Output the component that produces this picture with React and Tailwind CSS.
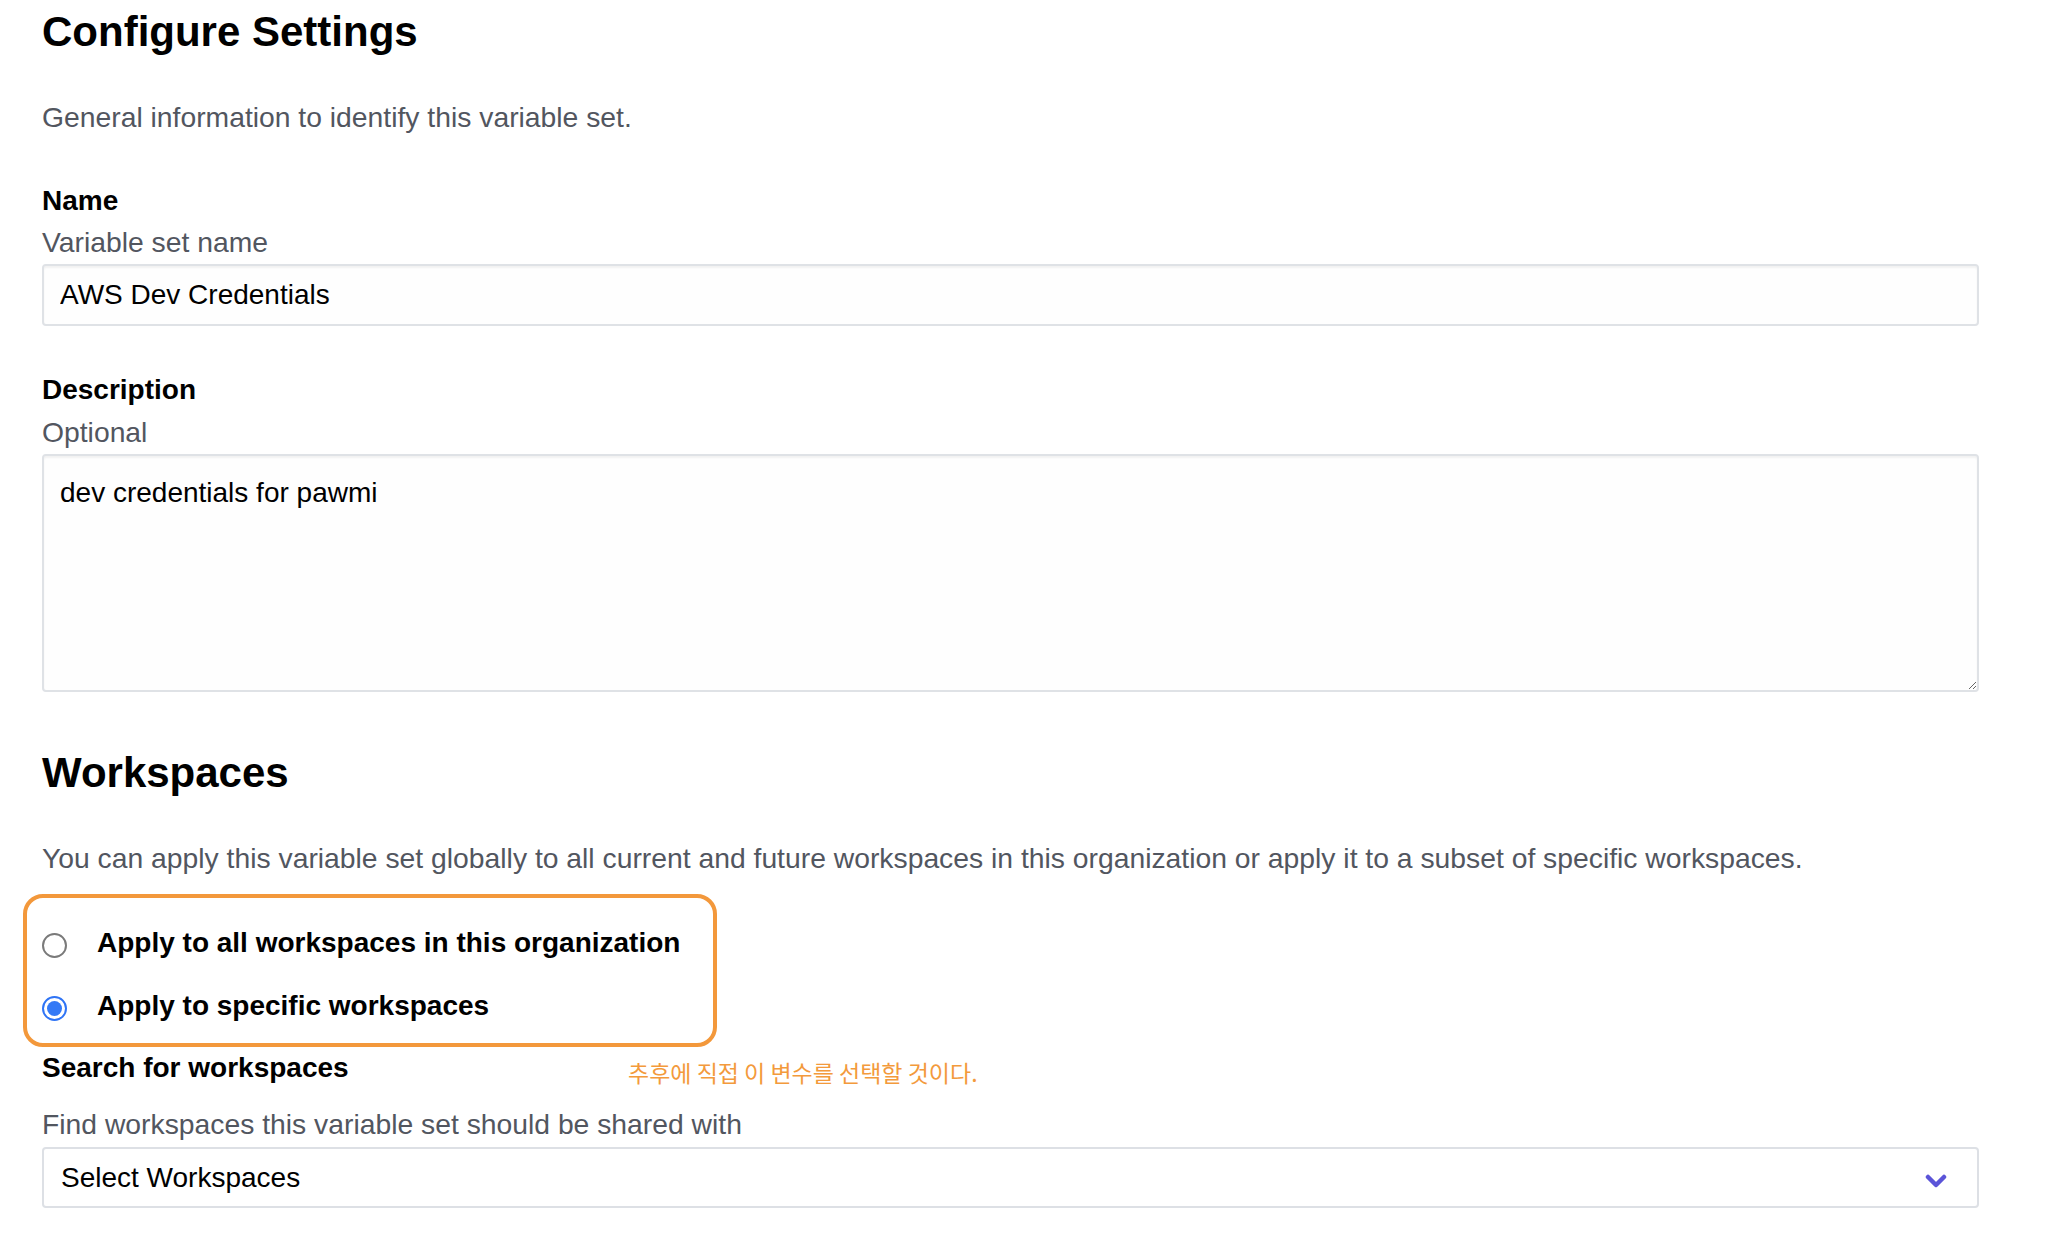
import React from 'react';

const Radio = ({ checked }) =>
  checked ? (
    <span className="mt-[6px] flex h-[25px] w-[25px] shrink-0 items-center justify-center rounded-full border-2 border-[#2f74f5] bg-white">
      <span className="h-[15px] w-[15px] rounded-full bg-[#3479f6]" />
    </span>
  ) : (
    <span className="mt-[6px] block h-[25px] w-[25px] shrink-0 rounded-full border-2 border-[#7a7a7a] bg-white" />
  );

export default function App() {
  return (
    <div className="min-h-screen bg-white pl-[42px] pr-[73px] pt-[8px] font-['Liberation_Sans',Arial,sans-serif] text-black">
      <h1 className="text-[42px] font-bold leading-[48px]">Configure Settings</h1>
      <p className="mt-[45px] text-[28.3px] leading-[32px] text-[#52565f]">
        General information to identify this variable set.
      </p>

      <div className="mt-[52px] text-[28px] font-bold leading-[32px]">Name</div>
      <div className="mt-[9px] text-[28.3px] leading-[32px] text-[#52565f]">Variable set name</div>
      <input
        defaultValue="AWS Dev Credentials"
        className="mt-[6px] block h-[62px] w-full rounded-[4px] border-2 border-[#dfe2e6] bg-[#fefefe] px-[16px] text-[28px] leading-[32px] text-black shadow-[inset_0_2px_2px_rgba(0,0,0,0.05)] outline-none"
      />

      <div className="mt-[48px] text-[28px] font-bold leading-[32px]">Description</div>
      <div className="mt-[10px] text-[28.3px] leading-[32px] text-[#52565f]">Optional</div>
      <textarea
        defaultValue="dev credentials for pawmi"
        className="mt-[6px] block h-[238px] w-full rounded-[4px] border-2 border-[#dfe2e6] bg-[#fefefe] px-[16px] pt-[21px] text-[28px] leading-[32px] text-black shadow-[inset_0_2px_2px_rgba(0,0,0,0.05)] outline-none"
      />

      <h2 className="mt-[57px] text-[42px] font-bold leading-[48px]">Workspaces</h2>
      <p className="mt-[45px] text-[28.3px] leading-[32px] text-[#52565f]">
        You can apply this variable set globally to all current and future workspaces in this organization or apply it to a subset of specific workspaces.
      </p>

      <div className="-ml-[19px] mt-[20px] w-[694px] rounded-[20px] border-4 border-[#f3983b] pb-[21px] pl-[15px] pt-[29px]">
        <label className="flex items-start gap-[30px]">
          <Radio checked={false} />
          <span className="text-[28px] font-bold leading-[32px]">Apply to all workspaces in this organization</span>
        </label>
        <label className="mt-[31px] flex items-start gap-[30px]">
          <Radio checked />
          <span className="text-[28px] font-bold leading-[32px]">Apply to specific workspaces</span>
        </label>
      </div>

      <div className="mt-[5px] flex items-start">
        <div className="w-[586px] shrink-0 text-[28px] font-bold leading-[32px]">Search for workspaces</div>
        <div className="mt-[8px] font-['Noto_Sans_CJK_KR',sans-serif] text-[23px] leading-[24px] text-[#f39a3c]">
          추후에 직접 이 변수를 선택할 것이다.
        </div>
      </div>
      <div className="mt-[24px] text-[28.3px] leading-[32px] text-[#52565f]">
        Find workspaces this variable set should be shared with
      </div>
      <div className="mt-[7px] flex h-[61px] w-full items-center justify-between rounded-[4px] border-2 border-[#dde0e5] bg-white pl-[17px] pr-[30px]">
        <span className="text-[28px] leading-[32px] text-black">Select Workspaces</span>
        <svg className="mt-[7px]" width="22" height="14" viewBox="0 0 22 14" fill="none">
          <polyline points="3,3 11,11 19,3" stroke="#5b54d8" strokeWidth="4.5" strokeLinecap="round" strokeLinejoin="round" />
        </svg>
      </div>
    </div>
  );
}
